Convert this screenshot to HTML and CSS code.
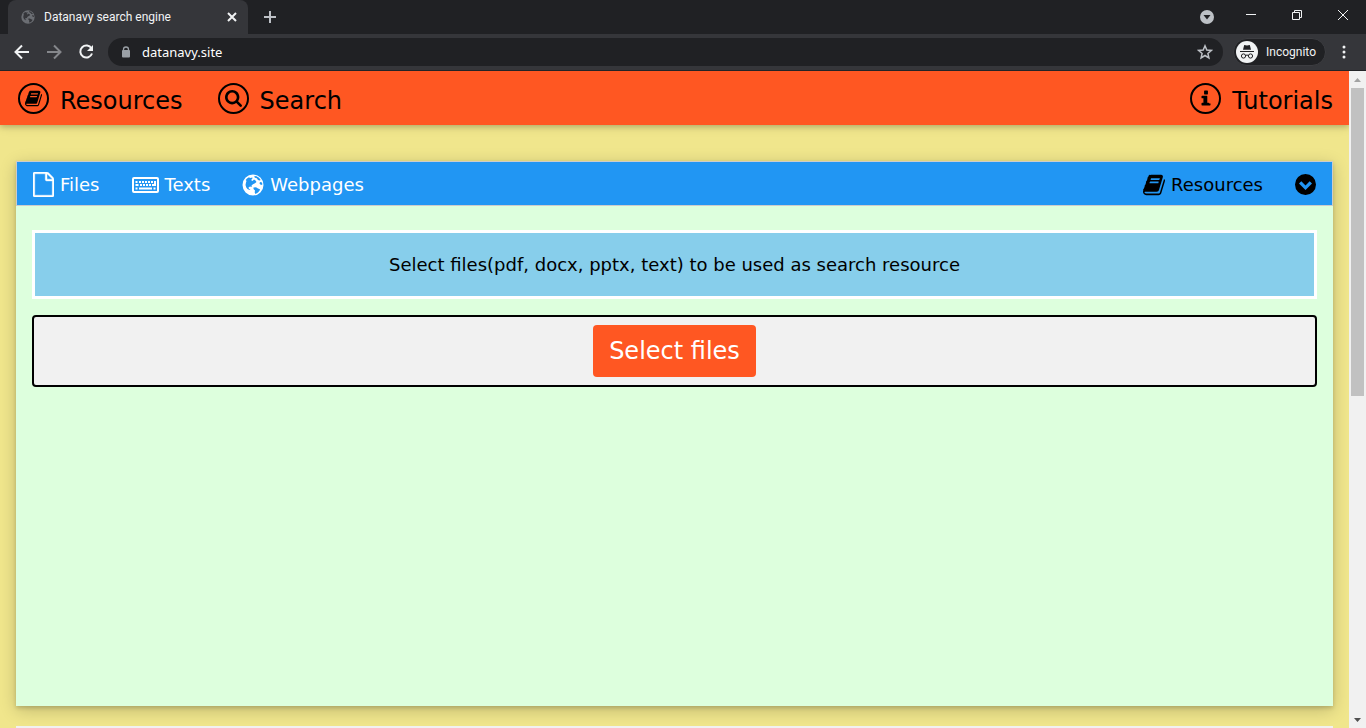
FILE: index.html
```html
<!DOCTYPE html>
<html lang="en">
<head>
<meta charset="utf-8">
<title>Datanavy search engine</title>
<link rel="stylesheet" href="styles.css">
</head>
<body>
<svg class="defs" aria-hidden="true">
  <symbol id="book" viewBox="0 64 1664 1664"><path d="M1639 478q40 57 18 129l-275 906q-19 64-76.5 107.5t-122.5 43.5h-923q-77 0-148.5-53.5t-99.5-131.5q-24-67-2-127 0-4 3-27t4-37q1-8-3-21.5t-3-19.5q2-11 8-21t16.5-23.5 16.5-23.5q23-38 45-91.5t30-91.5q3-10 .5-30t-.5-28q3-11 17-28t17-23q21-36 42-92t25-90q1-9-2.5-32t.5-28q4-13 22-30.5t22-22.5q19-26 42.5-84.5t27.5-96.5q1-8-3-25.5t-2-26.5q2-8 9-18t18-23 17-21q8-12 16.5-30.5t15-35 16-36 19.5-32 26.5-23.5 36-11.5 47.5 5.5l-1 3q38-9 51-9h761q74 0 114 56t18 130l-274 906q-36 119-71.5 153.5t-128.5 34.5h-869q-27 0-38 15-11 16-1 43 24 70 144 70h923q29 0 56-15.5t35-41.5l300-987q7-22 5-57 38 15 59 43zm-1064 2q-4 13 2 22.5t20 9.5h608q13 0 25.5-9.5t16.5-22.5l21-64q4-13-2-22.5t-20-9.5h-608q-13 0-25.5 9.5t-16.5 22.5zm-83 256q-4 13 2 22.5t20 9.5h608q13 0 25.5-9.5t16.5-22.5l21-64q4-13-2-22.5t-20-9.5h-608q-13 0-25.5 9.5t-16.5 22.5z"/></symbol>
  <symbol id="globe" viewBox="0 0 22 22"><path fill-rule="evenodd" d="M11 .5a10.500 10.500 0 1 1 0 21a10.500 10.500 0 1 1 0-21zM5 4.500l2-1.200 1 .6 2.500-.4-.3 1.500-1.200 1 1.500 1 1.500-1.500 1.500 1 1 1.500-1.500 1.200-2 1-1.500 1.300.3 1.500-1.800-.5-1.500 1 .5 1.500 1.500.5-1 .6-2-1.100-1.200-1.500-.8-2.500.5-2.500.5-1.500-.8-1zM12 2.500l2-.5 3 1.800 1.700 2.200-1.200.5-1.500-.5-1.200-1.700-1.800-.6zM18 8l2 .5.400 2-1.400.5-1.500-1.500zM11.500 13.500l2.500-.3 2 1.300 2 .7-.5 1.500-1.500 1.800-2.500 1.500-.8-1.500.3-2-1.500-1.500z"/></symbol>
</svg>
<div class="window">
  <header class="tabstrip">
    <div class="tab">
      <svg class="favicon" width="14" height="14"><use href="#globe"/></svg>
      <span class="tab-title">Datanavy search engine</span>
      <button class="plain" aria-label="Close tab"><svg width="10" height="10" viewBox="0 0 10 10"><path class="line thick" d="M1 1l8 8M9 1l-8 8"/></svg></button>
    </div>
    <button class="plain new-tab" aria-label="New tab"><svg width="12" height="12" viewBox="0 0 12 12"><path class="line thick" d="M6 0v12M0 6h12"/></svg></button>
    <div class="window-controls">
      <button class="plain" aria-label="Search tabs"><svg width="14" height="14" viewBox="0 0 14 14"><circle cx="7" cy="7" r="7" fill="#bdc1c6"/><path d="M3.500 5h7L7 9.500z" fill="#202124"/></svg></button>
      <button class="plain" aria-label="Minimize"><svg width="10" height="10" viewBox="0 0 10 10"><path class="line" d="M0 4.500h10"/></svg></button>
      <button class="plain" aria-label="Restore"><svg width="10" height="10" viewBox="0 0 10 10"><path class="line" d="M.5 2.500h7v7h-7zM2.500 2.500v-2h7v7h-2"/></svg></button>
      <button class="plain" aria-label="Close"><svg width="10" height="10" viewBox="0 0 10 10"><path class="line" d="M0 0l10 10M10 0L0 10"/></svg></button>
    </div>
  </header>
  <div class="toolbar">
    <button class="plain" aria-label="Back"><svg width="16" height="16" viewBox="0 0 16 16"><path class="line heavy" d="M15 8H2M8 1.500L1.500 8 8 14.500"/></svg></button>
    <button class="plain dim" aria-label="Forward"><svg width="16" height="16" viewBox="0 0 16 16"><path class="line heavy" d="M1 8h13M8 1.500L14.500 8 8 14.500"/></svg></button>
    <button class="plain" aria-label="Reload"><svg width="16" height="16" viewBox="0 0 16 16"><path class="line heavy" d="M13.500 4.500A6 6 0 1 0 14 9.500"/><path d="M15 1v6H9z" fill="currentColor"/></svg></button>
    <div class="address">
      <svg width="10" height="12" viewBox="0 0 10 12"><path d="M2.500 5V3.500a2.500 2.500 0 0 1 5 0V5" fill="none" stroke="#9aa0a6" stroke-width="1.300"/><rect x="1" y="4" width="8" height="7.500" rx="1" fill="#9aa0a6"/></svg>
      <input class="url" aria-label="Address" value="datanavy.site">
      <button class="plain star" aria-label="Bookmark this page"><svg width="16" height="16" viewBox="0 0 16 16"><path class="line" stroke-width="1.500" d="M8 1.800l1.800 4.200 4.500.4-3.400 3 1 4.500L8 11.500l-3.900 2.400 1-4.500-3.400-3 4.500-.4z"/></svg></button>
    </div>
    <button class="plain incognito"><svg width="22" height="22" viewBox="0 0 22 22"><circle cx="11" cy="11" r="11" fill="#f1f3f4"/><path d="M7 8.800l1.200-4.800 2.800.6 2.800-.6L15 8.800z" fill="#202124"/><path d="M4 10.500h14M9.500 14.500q1.500-1 3 0" fill="none" stroke="#202124" stroke-width="1.200"/><circle cx="7.500" cy="15" r="2.100" fill="none" stroke="#202124"/><circle cx="14.500" cy="15" r="2.100" fill="none" stroke="#202124"/></svg>Incognito</button>
    <button class="plain menu" aria-label="Menu"><svg width="4" height="14" viewBox="0 0 4 14" fill="currentColor"><circle cx="2" cy="2" r="1.500"/><circle cx="2" cy="7" r="1.500"/><circle cx="2" cy="12" r="1.500"/></svg></button>
  </div>
  <div class="viewport">
    <div class="page">
      <nav class="site-nav">
        <a href="#resources"><span class="ring"><svg width="17" height="17"><use href="#book"/></svg></span><span class="label">Resources</span></a>
        <a href="#search"><span class="ring"><svg width="17" height="17" viewBox="64 128 1664 1664"><path d="M1216 832q0-185-131.500-316.500t-316.500-131.500-316.500 131.500-131.500 316.500 131.500 316.500 316.500 131.500 316.500-131.500 131.500-316.500zm512 832q0 52-38 90t-90 38q-54 0-90-38l-343-342q-179 124-399 124-143 0-273.500-55.500t-225-150-150-225-55.500-273.500 55.500-273.500 150-225 225-150 273.500-55.500 273.500 55.500 225 150 150 225 55.500 273.500q0 220-124 399l343 343q37 37 37 90z"/></svg></span><span class="label">Search</span></a>
        <a class="push" href="#tutorials"><span class="ring"><svg width="18" height="18" viewBox="-128 0 1792 1600"><path d="M1216 1344v128q0 26-19 45t-45 19h-768q-26 0-45-19t-19-45v-128q0-26 19-45t45-19h128v-448h-128q-26 0-45-19t-19-45v-128q0-26 19-45t45-19h448q26 0 45 19t19 45v640h128q26 0 45 19t19 45zm-256-1216v256q0 26-19 45t-45 19h-256q-26 0-45-19t-19-45v-256q0-26 19-45t45-19h256q26 0 45 19t19 45z"/></svg></span><span class="label">Tutorials</span></a>
      </nav>
      <main>
        <section class="card">
          <div class="card-bar">
            <button class="plain"><svg width="21" height="25" viewBox="0 0 1536 1792" preserveAspectRatio="none"><path stroke="currentColor" stroke-width="30" d="M1468 380q28 28 48 76t20 88v1152q0 40-28 68t-68 28h-1344q-40 0-68-28t-28-68v-1600q0-40 28-68t68-28h896q40 0 88 20t76 48zm-444-244v376h376q-10-29-22-41l-313-313q-12-12-41-22zm384 1528v-1024h-416q-40 0-68-28t-28-68v-416h-768v1536h1280z"/></svg>Files</button>
            <button class="plain"><svg width="27" height="16" viewBox="0 0 27 16"><rect x="1" y="1" width="25" height="14" rx="1" fill="none" stroke="currentColor" stroke-width="2"/><path d="M3.500 4h2v2h-2zM7 4h2v2H7zM10 4h2v2h-2zM13 4h2v2h-2zM16 4h2v2h-2zM19 4h2v2h-2zM3.500 7h3v2h-3zM8 7h2v2H8zM11 7h2v2h-2zM14 7h2v2h-2zM17 7h2v2h-2zM22 4h2v5h-4V7h2zM3.500 10.500h2v2h-2zM7 10.500h13v2H7zM21.500 10.500h2v2h-2z"/></svg>Texts</button>
            <button class="plain"><svg width="22" height="22"><use href="#globe"/></svg>Webpages</button>
            <button class="plain push dark"><svg width="22" height="22"><use href="#book"/></svg>Resources</button>
            <button class="plain dark" aria-label="Expand"><svg width="21" height="21" viewBox="0 0 21 21"><path fill-rule="evenodd" d="M10.500 0a10.500 10.500 0 1 1 0 21a10.500 10.500 0 1 1 0-21zM10.500 16l6.500-6.500-2.300-2.300-4.200 4.200-4.200-4.200L4 9.500z"/></svg></button>
          </div>
          <div class="card-body">
            <p class="notice">Select files(pdf, docx, pptx, text) to be used as search resource</p>
            <div class="upload"><button class="select-files">Select files</button></div>
          </div>
        </section>
        <section class="next-card"></section>
      </main>
    </div>
    <div class="scrollbar" aria-hidden="true">
      <svg width="17" height="17" viewBox="0 0 17 17"><path d="M5 11h7L8.500 7z" fill="#a3a3a3"/></svg>
      <div class="thumb"></div>
      <svg width="17" height="17" viewBox="0 0 17 17"><path d="M5 7h7l-3.500 4z" fill="#505050"/></svg>
    </div>
  </div>
</div>
</body>
</html>
```
FILE: styles.css
```css
* { box-sizing: border-box; }
body { margin: 0; font-family: Verdana, "DejaVu Sans", sans-serif; color: #000; }
svg { display: block; flex: none; fill: currentColor; }
.defs { position: absolute; width: 0; height: 0; }
.line { fill: none; stroke: currentColor; }
.thick { stroke-width: 2; }
.heavy { stroke-width: 2; }
.plain { display: flex; align-items: center; padding: 0; border: 0; background: none; color: inherit; font: inherit; cursor: pointer; }
.push { margin-left: auto; }
.window { display: flex; flex-direction: column; height: 100vh; overflow: hidden; }

.tabstrip, .toolbar { display: flex; align-items: center; flex: none; color: #f1f3f4; font-family: "Segoe UI", Roboto, sans-serif; font-size: 12px; }
.tabstrip { height: 34px; padding: 0 18px 0 8px; background: #202124; }
.tab { display: flex; align-items: center; width: 240px; height: 34px; padding: 0 11px 0 13px; border-radius: 8px 8px 0 0; background: #35363a; }
.favicon { color: #6b6e73; }
.tab-title { flex: 1; margin-left: 9px; white-space: nowrap; }
.new-tab { margin-left: 16px; color: #bdc1c6; }
.window-controls { display: flex; align-items: center; gap: 36px; margin-left: auto; padding-bottom: 4px; }
.window-controls button:first-child { margin-right: -4px; padding-top: 4px; }
.toolbar { height: 37px; padding: 0 20px 0 14px; background: #35363a; border-bottom: 1px solid #232427; gap: 16px; }
.dim { color: #85878b; }
.address { display: flex; align-items: center; flex: 1; height: 28px; margin-left: -2px; padding: 0 10px 0 13px; border-radius: 14px; background: #202124; }
.address svg { color: #bdc1c6; }
.url { flex: 1; min-width: 0; margin-left: 11px; padding: 0; border: 0; outline: 0; background: none; color: #fff; font-family: "Segoe UI", "Noto Sans", sans-serif; font-size: 13px; }
.incognito { height: 28px; gap: 8px; margin-left: -6px; padding: 0 9px 0 2px; border: 1px solid #3c3d41; border-radius: 14px; background: #202124; }
.menu { width: 4px; }

.viewport { display: flex; flex: 1; min-height: 0; }
.page { flex: 1; min-width: 0; overflow: hidden; background: #f0e68c; }
.site-nav { position: relative; display: flex; align-items: center; gap: 35px; height: 54px; padding: 0 16px 0 18px; background: #ff5722; font-size: 24px; box-shadow: 0 2px 5px rgba(0,0,0,.16), 0 2px 10px rgba(0,0,0,.12); }
.site-nav a { display: flex; align-items: center; gap: 11px; color: #000; text-decoration: none; }
.ring { display: grid; place-items: center; width: 31px; height: 31px; border: 2px solid #000; border-radius: 50%; }
.label { padding-top: 5px; }
main { padding: 36px 16px 0; font-size: 18px; }
.card { min-height: 545px; background: #dfd; box-shadow: 0 2px 4px rgba(0,0,0,.16), 0 4px 16px rgba(0,0,0,.2); }
.card-bar { display: flex; align-items: center; gap: 32px; height: 45px; padding: 2px 16px 0; border: 1px solid #ccc; background: #2196f3; color: #fff; }
.card-bar button { gap: 6px; }
.card-bar .dark { color: #000; }
.card-body { padding: 24px 16px; }
.notice { margin: 0; padding: 18px 16px; border: 3px solid #fff; background: #87ceeb; line-height: 27px; text-align: center; }
.upload { margin-top: 16px; padding: 8px; border: 2px solid #000; border-radius: 4px; background: #f1f1f1; }
.select-files { display: block; margin: 0 auto; padding: 8px 16px; border: 0; border-radius: 4px; background: #ff5722; color: #fff; font: 24px/36px Verdana, "DejaVu Sans", sans-serif; cursor: pointer; }
.next-card { height: 80px; margin-top: 20px; background: #f1f1f1; }
.scrollbar { display: flex; flex-direction: column; flex: none; width: 17px; background: #f1f1f1; }
.thumb { flex: none; height: 308px; margin: 0 2px auto; background: #c1c1c1; }
```
